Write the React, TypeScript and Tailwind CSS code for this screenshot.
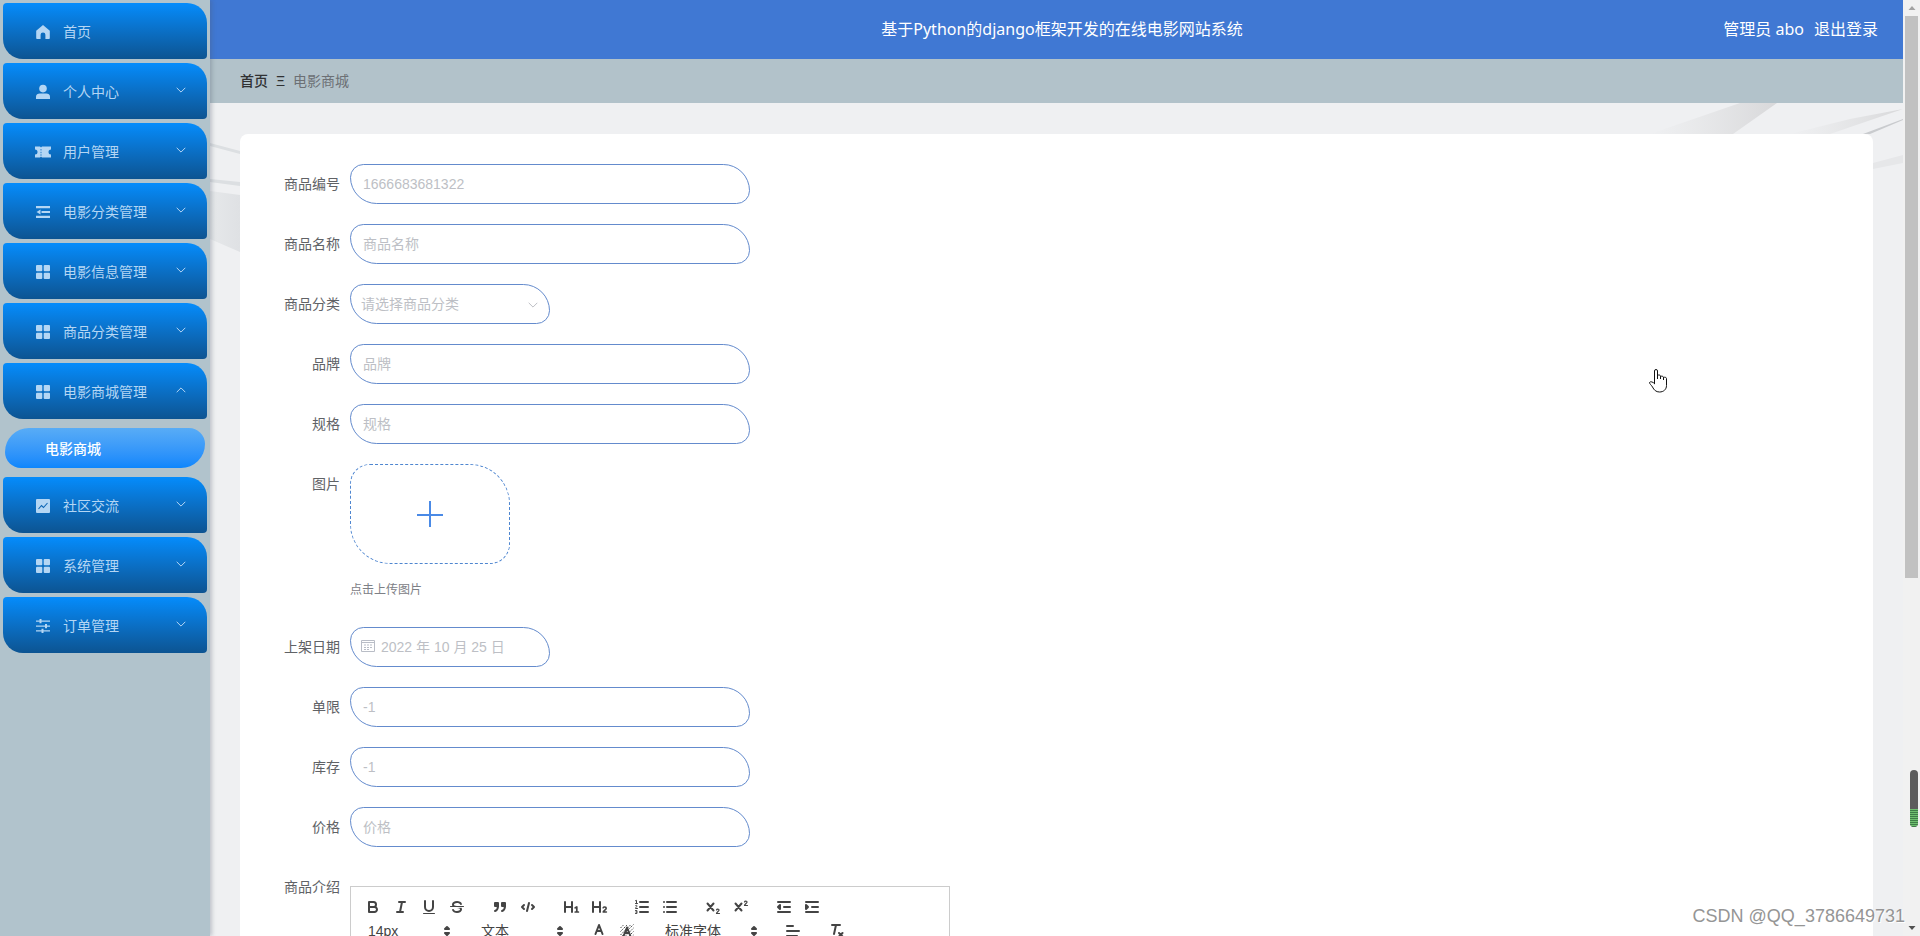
import React, { useState } from 'react';

type IconName = 'home' | 'user' | 'ticket' | 'fold' | 'grid' | 'chart' | 'sliders';

interface MenuEntry {
  title: string;
  icon: IconName;
  children?: string[];
}

const MENU: MenuEntry[] = [
  { title: '首页', icon: 'home' },
  { title: '个人中心', icon: 'user', children: [] },
  { title: '用户管理', icon: 'ticket', children: [] },
  { title: '电影分类管理', icon: 'fold', children: [] },
  { title: '电影信息管理', icon: 'grid', children: [] },
  { title: '商品分类管理', icon: 'grid', children: [] },
  { title: '电影商城管理', icon: 'grid', children: ['电影商城'] },
  { title: '社区交流', icon: 'chart', children: [] },
  { title: '系统管理', icon: 'grid', children: [] },
  { title: '订单管理', icon: 'sliders', children: [] },
];

const MenuIcon: React.FC<{ name: IconName }> = ({ name }) => (
  <svg viewBox="0 0 16 16" className="w-4 h-4 shrink-0" fill="currentColor">
    {name === 'home' && <path d="M8 1 1.200 6.800V14.200c0 .4.3.8.8.8h3.600v-4.200a2.400 2.400 0 0 1 4.800 0V15H14c.5 0 .8-.4.8-.8V6.800z" />}
    {name === 'user' && (
      <>
        <circle cx="8" cy="4.6" r="3.8" />
        <path d="M1 15v-2.400C1 10.600 2.800 9.400 4.800 9.400h6.400c2 0 3.800 1.200 3.800 3.200V15z" />
      </>
    )}
    {name === 'ticket' && (
      <path
        fillRule="evenodd"
        d="M0 2.500h5l1 1 1-1h9v3a2.500 2.500 0 0 0 0 5v3H7l-1-1-1 1H0v-3a2.500 2.500 0 0 0 0-5zM5.600 5v1.600h.8V5zm0 2.700v1.600h.8V7.700zm0 2.500v1.600h.8v-1.600z"
      />
    )}
    {name === 'fold' && (
      <>
        <path d="M1 2h14v2.200H1zM6.500 6.900H15v2.200H6.500zM1 11.800h14V14H1z" />
        <path d="M1.500 8 5.500 5.400v5.200z" />
      </>
    )}
    {name === 'grid' && (
      <>
        <rect x="1" y="1" width="6.300" height="6.300" rx="1" />
        <rect x="8.700" y="1" width="6.300" height="6.300" rx="1" />
        <rect x="1" y="8.700" width="6.300" height="6.300" rx="1" />
        <rect x="8.700" y="8.700" width="6.300" height="6.300" rx="1" />
      </>
    )}
    {name === 'chart' && (
      <>
        <rect x="1" y="1" width="14" height="14" rx="1" />
        <path d="m3.500 11 3-3.500 2 2 4-4.500" fill="none" stroke="#0d66b5" strokeWidth="1.100" />
      </>
    )}
    {name === 'sliders' && (
      <>
        <path d="M1 2.500h14v1.300H1zM1 7.400h14v1.300H1zM1 12.300h14v1.300H1z" />
        <path d="M4.500 1 6.500 1v4.300h-2zM10 5.900h2v4.300h-2zM6.500 10.800h2v4.300h-2z" />
      </>
    )}
  </svg>
);

const Chevron: React.FC<{ up?: boolean; className?: string }> = ({ up = false, className = '' }) => (
  <svg viewBox="0 0 10 6" className={`w-[10px] h-[6px] ${className}`} fill="none" stroke="currentColor">
    <path d={up ? 'M.7 5.200 5 .9l4.300 4.300' : 'M.7.8 5 5.100 9.300.8'} />
  </svg>
);

const Sidebar: React.FC = () => {
  const [opened, setOpened] = useState<string>('电影商城管理');

  return (
    <nav className="w-[210px] shrink-0 p-[3px] flex flex-col gap-1 bg-[#b1c3cc] relative z-10 shadow-[2px_0_4px_rgba(80,90,110,0.3)]">
      {MENU.map((m) => {
        const isOpen = opened === m.title;
        return (
          <div key={m.title}>
            <button
              type="button"
              onClick={() => setOpened(isOpen ? '' : m.title)}
              className="w-[204px] h-14 pt-[2px] pl-8 pr-[21px] flex items-center rounded-[4px_20px] bg-linear-to-b from-[#048cfc] to-[#0c5492] text-[#b4d6f4] text-sm"
            >
              <MenuIcon name={m.icon} />
              <span className="ml-3 flex-1 text-left">{m.title}</span>
              {m.children && <Chevron up={isOpen} className="mb-1" />}
            </button>
            {isOpen && m.children?.map((c) => (
              <a
                key={c}
                href="#"
                className="mt-[9px] mb-[5px] mx-[2px] h-10 pt-[2px] pl-10 flex items-center rounded-[24px_16px] bg-linear-to-b from-[#58acf6] to-[#0c86fc] text-white text-sm font-medium"
              >
                {c}
              </a>
            ))}
          </div>
        );
      })}
    </nav>
  );
};

const FormRow: React.FC<{ label: string; id: string; children: React.ReactNode }> = ({ label, id, children }) => (
  <div className="flex items-start mb-5">
    <label htmlFor={id} className="w-[110px] pr-[10px] shrink-0 text-right text-sm leading-10 text-[#606266]">{label}</label>
    {children}
  </div>
);

const TextField: React.FC<{ label: string; id: string; placeholder: string }> = ({ label, id, placeholder }) => (
  <FormRow label={label} id={id}>
    <input
      id={id}
      type="text"
      placeholder={placeholder}
      className="w-[400px] h-10 px-3 rounded-[20px_40px] border border-[#648bcd] bg-white text-sm placeholder:text-[#bdbfc5] outline-none"
    />
  </FormRow>
);

// Toolbar glyphs share an 18x18 grid and the same stroke settings
const ToolButton: React.FC<{ title: string; children: React.ReactNode }> = ({ title, children }) => (
  <button type="button" aria-label={title} className="w-7 h-6 px-[5px] py-[3px]">
    <svg viewBox="0 0 18 18" className="w-[18px] h-[18px]" fill="none" stroke="#444" strokeWidth="2" strokeLinecap="round" strokeLinejoin="round">
      {children}
    </svg>
  </button>
);

const ToolSelect: React.FC<{ title: string; value: string; wide?: boolean }> = ({ title, value, wide = false }) => (
  <div className={`relative h-6 mr-[15px] ${wide ? 'w-[108px]' : 'w-[98px]'}`}>
    <select aria-label={title} className="appearance-none w-full h-6 pl-[9px] pr-5 text-sm leading-6 text-[#444] bg-transparent outline-none">
      <option>{value}</option>
    </select>
    <svg viewBox="0 0 18 18" className="absolute right-[1px] top-[3px] w-[18px] h-[18px] pointer-events-none" fill="#444" stroke="#444" strokeWidth="2" strokeLinejoin="round">
      <polygon points="7 11 9 13 11 11 7 11" />
      <polygon points="7 7 9 5 11 7 7 7" />
    </svg>
  </div>
);

const ToolGroup: React.FC<{ children: React.ReactNode }> = ({ children }) => (
  <div className="flex mr-[15px]">{children}</div>
);

const Editor: React.FC = () => (
  <div className="mt-[19px] w-[600px] border border-[#ccc]">
    <div className="p-2 flex flex-wrap">
      <ToolGroup>
        <ToolButton title="加粗">
          <path d="M5,4H9.500A2.500,2.500,0,0,1,12,6.500v0A2.500,2.500,0,0,1,9.500,9H5V4Z" />
          <path d="M5,9h5.500A2.500,2.500,0,0,1,13,11.500v0A2.500,2.500,0,0,1,10.500,14H5V9Z" />
        </ToolButton>
        <ToolButton title="斜体">
          <path d="M7 4h6M5 14h6M8 14l2-10" />
        </ToolButton>
        <ToolButton title="下划线">
          <path d="M5,3V9a4.012,4.012,0,0,0,4,4H9a4.012,4.012,0,0,0,4-4V3" />
          <rect fill="#444" stroke="none" height="1" rx="0.5" width="12" x="3" y="15" />
        </ToolButton>
        <ToolButton title="删除线">
          <path strokeWidth="1" d="M15.500 8.500h-13" />
          <path fill="#444" stroke="none" d="M9.007,8C6.542,7.791,6,7.519,6,6.500,6,5.792,7.283,5,9,5c1.571,0,2.765.679,2.969,1.309a1,1,0,0,0,1.900-.617C13.356,4.106,11.354,3,9,3,6.200,3,4,4.538,4,6.500a3.200,3.200,0,0,0,.5,1.843Z" />
          <path fill="#444" stroke="none" d="M8.984,10C11.457,10.208,12,10.479,12,11.500c0,0.708-1.283,1.500-3,1.500-1.571,0-2.765-.679-2.969-1.309a1,1,0,1,0-1.900.617C4.644,13.894,6.646,15,9,15c2.800,0,5-1.538,5-3.500a3.200,3.200,0,0,0-.5-1.843Z" />
        </ToolButton>
      </ToolGroup>
      <ToolGroup>
        <ToolButton title="引用">
          <rect fill="#444" height="3" width="3" x="4" y="5" />
          <rect fill="#444" height="3" width="3" x="11" y="5" />
          <path d="M7,8c0,4.031-3,5-3,5" />
          <path d="M14,8c0,4.031-3,5-3,5" />
        </ToolButton>
        <ToolButton title="代码块">
          <path d="M5 7 3 9l2 2M13 7l2 2-2 2M10 5 8 13" />
        </ToolButton>
      </ToolGroup>
      <ToolGroup>
        <ToolButton title="标题一">
          <path d="M3 4v10M10 4v10M10 9H3" />
          <path strokeWidth="1.700" d="M13.200 9.800l1.600-.8V14M13.200 14h3.200" />
        </ToolButton>
        <ToolButton title="标题二">
          <path d="M3 4v10M10 4v10M10 9H3" />
          <path strokeWidth="1.600" d="M13.200 9.700c.4-1 3-1.200 3 .6 0 1.400-2.700 2-3 3.700h3.200" />
        </ToolButton>
      </ToolGroup>
      <ToolGroup>
        <ToolButton title="有序列表">
          <path d="M7 4h8M7 9h8M7 14h8" />
          <path strokeWidth="1" d="M2.500 2.700l1-.4V5.500M2.500 5.500h2M2.500 7.600c.5-.5 1.800-.3 1.500.6-.2.700-1.500 1-1.500 2.300h2M2.500 12.500h1.400v3H2.500M2.800 14h1" />
        </ToolButton>
        <ToolButton title="无序列表">
          <path d="M6 4h9M6 9h9M6 14h9M3 4h0M3 9h0M3 14h0" />
        </ToolButton>
      </ToolGroup>
      <ToolGroup>
        <ToolButton title="下标">
          <path d="M3.500 5.500l6 7M9.500 5.500l-6 7" />
          <path strokeWidth="1.200" d="M12.500 12c.3-1.200 2.600-1.200 2.500.2-.1 1-2.300 1.700-2.500 3.300H15.500" />
        </ToolButton>
        <ToolButton title="上标">
          <path d="M3.500 5.500l6 7M9.500 5.500l-6 7" />
          <path strokeWidth="1.200" d="M12.500 4c.3-1.200 2.600-1.200 2.500.2-.1 1-2.300 1.700-2.500 3.300H15.500" />
        </ToolButton>
      </ToolGroup>
      <ToolGroup>
        <ToolButton title="减少缩进">
          <path d="M3 14h12M3 4h12M9 9h6" />
          <polygon fill="#444" points="5 7 5 11 3 9" />
        </ToolButton>
        <ToolButton title="增加缩进">
          <path d="M3 14h12M3 4h12M9 9h6" />
          <polygon fill="#444" points="3 7 3 11 5 9" />
        </ToolButton>
      </ToolGroup>
      <ToolSelect title="字号" value="14px" />
      <ToolSelect title="段落" value="文本" />
      <ToolGroup>
        <ToolButton title="文字颜色">
          <path d="M5.500 12 9 3l3.500 9M6.800 9h4.400" />
        </ToolButton>
        <ToolButton title="背景颜色">
          <path strokeWidth="1" strokeDasharray="1.500 1" strokeLinecap="butt" d="M2.500 6l3.500-3.500M2.500 9.500l7-7M2.500 13 13 2.500M2.500 15.500 15.500 2.500M6 15.500l9.500-9.500M9.500 15.500l6-6M13 15.500l2.500-2.500" />
          <path d="M5.800 13.500 9 5.500l3.200 8M7 11h4" />
        </ToolButton>
      </ToolGroup>
      <ToolSelect title="字体" value="标准字体" wide />
      <ToolGroup>
        <ToolButton title="对齐">
          <path d="M3 9h12M3 14h10M3 4h6" />
        </ToolButton>
      </ToolGroup>
      <ToolGroup>
        <ToolButton title="清除格式">
          <path d="M5 3h8M9 3 7 12M12 11l3.500 3.500M15.500 11 12 14.500" />
        </ToolButton>
      </ToolGroup>
    </div>
    <div className="h-[300px] border-t border-[#ccc]" />
  </div>
);

const ProductForm: React.FC = () => (
  <form className="mx-[30px] mt-[31px] pt-[30px] bg-white rounded-lg">
    <TextField label="商品编号" id="code" placeholder="1666683681322" />
    <TextField label="商品名称" id="name" placeholder="商品名称" />
    <FormRow label="商品分类" id="category">
      <div className="relative w-[200px]">
        <select id="category" className="appearance-none w-full h-10 px-[10px] rounded-[20px_40px] border border-[#648bcd] bg-white text-sm text-[#bdbfc5] outline-none">
          <option>请选择商品分类</option>
        </select>
        <Chevron className="absolute right-3 top-[18px] text-[#bdbfc5] pointer-events-none" />
      </div>
    </FormRow>
    <TextField label="品牌" id="brand" placeholder="品牌" />
    <TextField label="规格" id="spec" placeholder="规格" />
    <FormRow label="图片" id="picture">
      <div>
        <button id="picture" type="button" aria-label="上传图片" className="w-40 h-[100px] flex items-center justify-center rounded-[20px_40px] border border-dashed border-[#4f86d0]">
          <svg viewBox="0 0 28 28" className="w-7 h-7" stroke="#4a8ae6" strokeWidth="2">
            <path d="M14 1v26M1 15h26" />
          </svg>
        </button>
        <p className="mt-4 mb-[7px] text-xs leading-5 text-[#7d8086]">点击上传图片</p>
      </div>
    </FormRow>
    <FormRow label="上架日期" id="date">
      <div className="relative w-[200px]">
        <input
          id="date"
          type="text"
          placeholder="2022 年 10 月 25 日"
          className="w-full h-10 pl-[30px] pr-3 rounded-[20px_40px] border border-[#648bcd] bg-white text-sm placeholder:text-[#bdbfc5] outline-none"
        />
        <svg viewBox="0 0 14 14" className="absolute left-[11px] top-3 w-[14px] h-[14px] pointer-events-none" fill="none" stroke="#b9bdc6">
          <path d="M.5 1.500h13v11H.5zM.5 3.500h13M3 6h2M6 6h2M9 6h2M3 8.500h2M6 8.500h2M9 8.500h2M3 10.500h2M6 10.500h2" />
        </svg>
      </div>
    </FormRow>
    <TextField label="单限" id="limit" placeholder="-1" />
    <TextField label="库存" id="stock" placeholder="-1" />
    <TextField label="价格" id="price" placeholder="价格" />
    <FormRow label="商品介绍" id="intro">
      <Editor />
    </FormRow>
  </form>
);

// Pale marble veins behind the form card
const Marble: React.FC = () => (
  <svg className="absolute inset-0 w-full h-full" viewBox="0 0 1693 833" preserveAspectRatio="none" aria-hidden="true">
    <defs>
      <linearGradient id="veinA" x1="0" x2="1">
        <stop offset="0" stopColor="#dfe0e1" stopOpacity="0" />
        <stop offset="1" stopColor="#d8d8da" />
      </linearGradient>
      <linearGradient id="veinB" x1="1" x2="0">
        <stop offset="0" stopColor="#dfe1e4" />
        <stop offset="1" stopColor="#e6e8ea" />
      </linearGradient>
    </defs>
    <path d="M1567 0 1523 31H1440L1530 0z" fill="url(#veinA)" />
    <path d="M1693 6 1620 31h-40l60-15z" fill="url(#veinA)" />
    <path d="M1693 17 1660 31h-7l40-15z" fill="#c9cbce" />
    <path d="M1663 60l30-8v8l-30 6z" fill="#e6e7e9" />
    <path d="M0 40l30 8v3L0 43zM0 76l30 3v4L0 79zM0 120l30 5v2L0 122z" fill="#dcdfe2" />
    <path d="M0 88l30 4v57L0 136z" fill="url(#veinB)" />
  </svg>
);

const PageScrollbar: React.FC = () => (
  <div className="w-[17px] shrink-0 px-[2px] flex flex-col items-center bg-[#f1f1f1]">
    <svg viewBox="0 0 8 16" className="w-2 h-4 shrink-0" fill="#a3a3a3"><path d="M4 6 7.500 10h-7z" /></svg>
    <div className="w-[13px] h-3/5 bg-[#c1c1c1]" />
    <div className="flex-1" />
    <svg viewBox="0 0 8 16" className="w-2 h-4 shrink-0" fill="#505050"><path d="M4 10 7.500 6h-7z" /></svg>
  </div>
);

export default function App() {
  return (
    <div className="h-screen flex overflow-hidden relative font-['Liberation_Sans','Noto_Sans_CJK_SC',sans-serif]">
      <Sidebar />
      <div className="flex-1 min-w-0 flex flex-col">
        <header className="h-[59px] shrink-0 pl-9 pr-[25px] pb-[2px] grid grid-cols-[1fr_auto_1fr] items-center bg-[#4078d3] text-white font-['Noto_Sans','Noto_Sans_CJK_SC',sans-serif]">
          <h1 className="col-start-2 text-base">基于Python的django框架开发的在线电影网站系统</h1>
          <div className="flex justify-end gap-[10px] text-base">
            <span>管理员 abo</span>
            <a href="#">退出登录</a>
          </div>
        </header>
        <div className="h-11 shrink-0 px-[30px] flex items-center gap-2 bg-[#b2c2ca] text-sm">
          <a href="#" className="font-medium text-[#303133]">首页</a>
          <span className="text-[#303133]">Ξ</span>
          <span className="text-[#6c7075]">电影商城</span>
        </div>
        <main className="flex-1 relative overflow-hidden bg-[#eff0f2]">
          <Marble />
          <div className="relative">
            <ProductForm />
          </div>
        </main>
      </div>
      <PageScrollbar />

      <svg viewBox="0 0 20 26" className="absolute left-[1648px] top-[368px] w-5 h-[26px] z-20" fill="#fff" stroke="#111" strokeLinejoin="round" strokeLinecap="round">
        <path d="M6.500 15.500V3a1.500 1.500 0 0 1 3 0v8V7.500c1-.9 3-.7 3 .8V11 8.500c1-.7 3-.3 3 1V12v-2.500c1-.6 3-.2 3 1v7c0 4-3 6.500-7 6.500-3.500 0-5.500-2-7-5-1-1.800-3-3-3-4.500 1-1.500 3.500-.5 5 1z" />
      </svg>
      <div className="absolute right-[2px] top-[770px] w-2 h-[57px] z-20 rounded-full overflow-hidden bg-[#5c5c5c] flex items-end">
        <div className="w-full h-[18px] bg-[repeating-linear-gradient(to_bottom,#6fbf6f_0_1px,#3f7d48_1px_2px)]" />
      </div>
      <div className="absolute right-[15px] bottom-2 z-20 text-lg leading-6 text-[#959595] [text-shadow:1px_1px_0_#fff] whitespace-nowrap">CSDN @QQ_3786649731</div>
    </div>
  );
}
